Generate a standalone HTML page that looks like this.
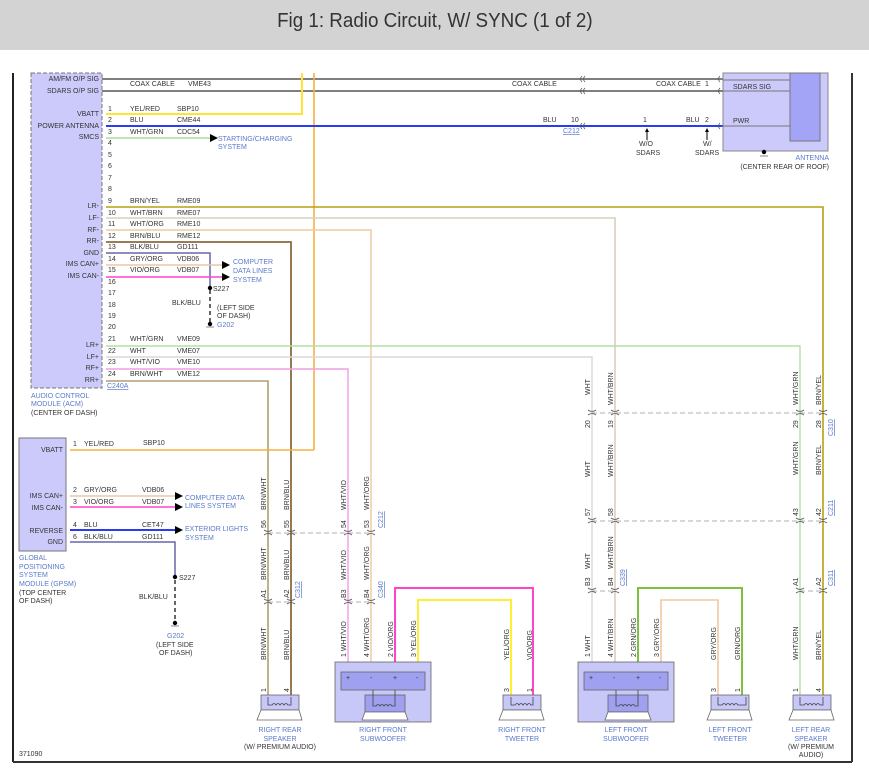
<!DOCTYPE html>
<html><head><meta charset="utf-8"><style>
html,body{margin:0;padding:0;background:#fff;width:869px;height:781px;overflow:hidden}
.hdr{position:absolute;left:0;top:0;width:869px;height:50px;background:#d3d3d3;text-align:center;font:20px "Liberation Sans",sans-serif;line-height:43px;color:#333}
.hdr span{display:inline-block;transform:scaleX(0.94)}
svg{position:absolute;left:0;top:0}
text{font-family:"Liberation Sans",sans-serif;font-size:7px;fill:#333}
.b{fill:#5a7acc}
.u{fill:#5a7acc;text-decoration:underline}
</style></head><body>
<div class="hdr"><span>Fig 1: Radio Circuit, W/ SYNC (1 of 2)</span></div>
<svg width="869" height="781" viewBox="0 0 869 781">
<line x1="13" y1="73" x2="13" y2="762" stroke="#222" stroke-width="2"/>
<line x1="852" y1="73" x2="852" y2="762" stroke="#333" stroke-width="2"/>
<line x1="13" y1="762" x2="852" y2="762" stroke="#333" stroke-width="2"/>

<rect x="31" y="73" width="71" height="315" fill="#cccafa" stroke="#777" stroke-dasharray="4,2"/>
<g text-anchor="end">
<text x="99" y="81">AM/FM O/P SIG</text><text x="99" y="93">SDARS O/P SIG</text>
<text x="99" y="116">VBATT</text><text x="99" y="128">POWER ANTENNA</text><text x="99" y="139">SMCS</text>
<text x="99" y="208">LR-</text><text x="99" y="220">LF-</text><text x="99" y="232">RF-</text><text x="99" y="243">RR-</text>
<text x="99" y="255">GND</text><text x="99" y="266">IMS CAN+</text><text x="99" y="278">IMS CAN-</text>
<text x="99" y="347">LR+</text><text x="99" y="359">LF+</text><text x="99" y="370">RF+</text><text x="99" y="382">RR+</text>
</g>
<g>
<text x="108" y="111">1</text><text x="108" y="122">2</text><text x="108" y="134">3</text><text x="108" y="145">4</text>
<text x="108" y="157">5</text><text x="108" y="168">6</text><text x="108" y="180">7</text><text x="108" y="191">8</text>
<text x="108" y="203">9</text><text x="108" y="215">10</text><text x="108" y="226">11</text><text x="108" y="238">12</text>
<text x="108" y="249">13</text><text x="108" y="261">14</text><text x="108" y="272">15</text><text x="108" y="284">16</text>
<text x="108" y="295">17</text><text x="108" y="307">18</text><text x="108" y="318">19</text><text x="108" y="329">20</text>
<text x="108" y="341">21</text><text x="108" y="353">22</text><text x="108" y="364">23</text><text x="108" y="376">24</text>
<text x="130" y="86">COAX CABLE</text><text x="188" y="86">VME43</text>
<text x="130" y="111">YEL/RED</text><text x="177" y="111">SBP10</text>
<text x="130" y="122">BLU</text><text x="177" y="122">CME44</text>
<text x="130" y="134">WHT/GRN</text><text x="177" y="134">CDC54</text>
<text x="130" y="203">BRN/YEL</text><text x="177" y="203">RME09</text>
<text x="130" y="215">WHT/BRN</text><text x="177" y="215">RME07</text>
<text x="130" y="226">WHT/ORG</text><text x="177" y="226">RME10</text>
<text x="130" y="238">BRN/BLU</text><text x="177" y="238">RME12</text>
<text x="130" y="249">BLK/BLU</text><text x="177" y="249">GD111</text>
<text x="130" y="261">GRY/ORG</text><text x="177" y="261">VDB06</text>
<text x="130" y="272">VIO/ORG</text><text x="177" y="272">VDB07</text>
<text x="130" y="341">WHT/GRN</text><text x="177" y="341">VME09</text>
<text x="130" y="353">WHT</text><text x="177" y="353">VME07</text>
<text x="130" y="364">WHT/VIO</text><text x="177" y="364">VME10</text>
<text x="130" y="376">BRN/WHT</text><text x="177" y="376">VME12</text>
<text x="172" y="305">BLK/BLU</text>
<text x="107" y="388" class="u">C240A</text>
<text x="31" y="398" class="b">AUDIO CONTROL</text>
<text x="31" y="406" class="b">MODULE (ACM)</text>
<text x="31" y="415">(CENTER OF DASH)</text>
<text x="218" y="141" class="b">STARTING/CHARGING</text><text x="218" y="149" class="b">SYSTEM</text>
<text x="233" y="264" class="b">COMPUTER</text><text x="233" y="273" class="b">DATA LINES</text><text x="233" y="282" class="b">SYSTEM</text>
<text x="213" y="291">S227</text>
<text x="217" y="310">(LEFT SIDE</text><text x="217" y="318">OF DASH)</text>
<text x="217" y="327" class="b">G202</text>
</g>

<line x1="102" y1="79" x2="723" y2="79" stroke="#333" stroke-width="1.3"/>
<line x1="102" y1="91" x2="723" y2="91" stroke="#333" stroke-width="1.3"/>
<text x="512" y="86">COAX CABLE</text><text x="656" y="86">COAX CABLE</text><text x="705" y="86">1</text>

<g fill="none">
<polyline points="106,114 302,114 302,73" stroke="#ffe433" stroke-width="2"/>
<line x1="314" y1="73" x2="314" y2="450" stroke="#f6b040" stroke-width="1.6"/>
<line x1="106" y1="126" x2="723" y2="126" stroke="#2a3cf0" stroke-width="2"/>
<line x1="106" y1="138" x2="210" y2="138" stroke="#a8e09a" stroke-width="1.5"/>
<polyline points="106,207 823,207 823,696" stroke="#b8a010" stroke-width="1.6"/>
<polyline points="106,218 615,218 615,696" stroke="#d8d0b8" stroke-width="1.6"/>
<polyline points="106,230 371,230 371,662" stroke="#f0c8a0" stroke-width="1.4"/>
<polyline points="106,242 291,242 291,696" stroke="#8a6a40" stroke-width="1.8"/>
<polyline points="106,253 210,253 210,288" stroke="#6666aa" stroke-width="1.5"/>
<line x1="210" y1="290" x2="210" y2="322" stroke="#333" stroke-width="1.5" stroke-dasharray="4,3"/>
<line x1="106" y1="265" x2="222" y2="265" stroke="#e8c8a8" stroke-width="1.5"/>
<line x1="106" y1="277" x2="222" y2="277" stroke="#ff44cc" stroke-width="1.5"/>
<polyline points="106,346 800,346 800,696" stroke="#b0e0a0" stroke-width="1.4"/>
<polyline points="106,357 592,357 592,662" stroke="#d8d8d8" stroke-width="1.4"/>
<polyline points="106,369 348,369 348,662" stroke="#f0a0e0" stroke-width="1.4"/>
<polyline points="106,381 268,381 268,696" stroke="#b0a070" stroke-width="1.6"/>
</g>
<polygon points="210,134 218,138 210,142" fill="#000"/>
<polygon points="222,261 230,265 222,269" fill="#000"/>
<polygon points="222,273 230,277 222,281" fill="#000"/>
<circle cx="210" cy="288" r="2.2" fill="#000"/>
<circle cx="210" cy="324" r="2.2" fill="#000"/>
<line x1="206" y1="327" x2="214" y2="327" stroke="#888"/>

<rect x="723" y="73" width="105" height="78" fill="#cccafa" stroke="#888"/>
<rect x="790" y="73" width="30" height="68" fill="#a4a4f6" stroke="#777"/>
<line x1="723" y1="91" x2="790" y2="91" stroke="#777"/>
<line x1="723" y1="126" x2="790" y2="126" stroke="#777"/>
<line x1="723" y1="80" x2="790" y2="80" stroke="#777"/>
<text x="733" y="89">SDARS SIG</text><text x="733" y="123">PWR</text>
<circle cx="764" cy="152" r="2.2" fill="#000"/><line x1="760" y1="156" x2="768" y2="156" stroke="#888"/>
<text x="829" y="160" class="b" text-anchor="end">ANTENNA</text>
<text x="829" y="169" text-anchor="end">(CENTER REAR OF ROOF)</text>
<text x="543" y="122">BLU</text><text x="571" y="122">10</text><text x="563" y="133" class="u">C212</text>
<text x="643" y="122">1</text><text x="686" y="122">BLU</text><text x="705" y="122">2</text>
<line x1="647" y1="131" x2="647" y2="140" stroke="#000"/><polygon points="645,132 647,128 649,132" fill="#000"/>
<line x1="707" y1="131" x2="707" y2="140" stroke="#000"/><polygon points="705,132 707,128 709,132" fill="#000"/>
<text x="639" y="146">W/O</text><text x="636" y="155">SDARS</text>
<text x="703" y="146">W/</text><text x="695" y="155">SDARS</text>
<g fill="none" stroke="#555" stroke-width="0.8">
<path d="M582,76 q-3,3 0,6 M585,76 q-3,3 0,6 M582,88 q-3,3 0,6 M585,88 q-3,3 0,6 M582,123 q-3,3 0,6 M585,123 q-3,3 0,6"/>
<path d="M720,76 q-3,3 0,6 M720,88 q-3,3 0,6 M720,123 q-3,3 0,6"/>
</g>

<rect x="19" y="438" width="47" height="113" fill="#cccafa" stroke="#777"/>
<g text-anchor="end"><text x="63" y="452">VBATT</text><text x="63" y="498">IMS CAN+</text><text x="63" y="510">IMS CAN-</text><text x="63" y="533">REVERSE</text><text x="63" y="544">GND</text></g>
<g fill="none">
<polyline points="70,450 314,450" stroke="#f6b040" stroke-width="1.6"/>
<line x1="70" y1="496" x2="175" y2="496" stroke="#e8c8a8" stroke-width="1.5"/>
<line x1="70" y1="507" x2="175" y2="507" stroke="#ff44cc" stroke-width="1.5"/>
<line x1="70" y1="530" x2="175" y2="530" stroke="#2a3cf0" stroke-width="2"/>
<polyline points="70,542 175,542 175,577" stroke="#6666aa" stroke-width="1.5"/>
<line x1="175" y1="580" x2="175" y2="622" stroke="#333" stroke-width="1.5" stroke-dasharray="4,3"/>
</g>
<polygon points="175,492 183,496 175,500" fill="#000"/><polygon points="175,503 183,507 175,511" fill="#000"/><polygon points="175,526 183,530 175,534" fill="#000"/>
<circle cx="175" cy="577" r="2.2" fill="#000"/><circle cx="175" cy="623" r="2.2" fill="#000"/><line x1="171" y1="626" x2="179" y2="626" stroke="#888"/>
<text x="73" y="446">1</text><text x="84" y="446">YEL/RED</text><text x="143" y="445">SBP10</text>
<text x="73" y="492">2</text><text x="84" y="492">GRY/ORG</text><text x="142" y="492">VDB06</text>
<text x="73" y="504">3</text><text x="84" y="504">VIO/ORG</text><text x="142" y="504">VDB07</text>
<text x="73" y="527">4</text><text x="84" y="527">BLU</text><text x="142" y="527">CET47</text>
<text x="73" y="539">6</text><text x="84" y="539">BLK/BLU</text><text x="142" y="539">GD111</text>
<text x="185" y="500" class="b">COMPUTER DATA</text><text x="185" y="508" class="b">LINES SYSTEM</text>
<text x="185" y="531" class="b">EXTERIOR LIGHTS</text><text x="185" y="540" class="b">SYSTEM</text>
<text x="179" y="580">S227</text><text x="139" y="599">BLK/BLU</text>
<text x="167" y="638" class="b">G202</text><text x="156" y="647">(LEFT SIDE</text><text x="159" y="655">OF DASH)</text>
<text x="19" y="560" class="b">GLOBAL</text><text x="19" y="569" class="b">POSITIONING</text><text x="19" y="577" class="b">SYSTEM</text><text x="19" y="586" class="b">MODULE (GPSM)</text>
<text x="19" y="595">(TOP CENTER</text><text x="19" y="603">OF DASH)</text>
<text x="19" y="756">371090</text>

<g stroke="#999" stroke-dasharray="5,3" stroke-width="0.8">
<line x1="592" y1="413" x2="823" y2="413"/>
<line x1="268" y1="533" x2="371" y2="533"/>
<line x1="592" y1="521" x2="823" y2="521"/>
<line x1="268" y1="602" x2="291" y2="602"/><line x1="348" y1="602" x2="371" y2="602"/>
<line x1="592" y1="591" x2="615" y2="591"/><line x1="800" y1="591" x2="823" y2="591"/>
</g>

<g fill="none">
<polyline points="395,662 395,588 533,588 533,696" stroke="#ff44cc" stroke-width="2"/>
<polyline points="418,662 418,600 511,600 511,696" stroke="#ffee33" stroke-width="2"/>
<polyline points="638,662 638,588 742,588 742,696" stroke="#80c040" stroke-width="2"/>
<polyline points="661,662 661,600 718,600 718,696" stroke="#f0c8a0" stroke-width="1.6"/>
</g>

<g>
<text transform="translate(266,510) rotate(-90)">BRN/WHT</text>
<text transform="translate(289,510) rotate(-90)">BRN/BLU</text>
<text transform="translate(266,528) rotate(-90)">56</text>
<text transform="translate(289,528) rotate(-90)">55</text>
<text transform="translate(346,510) rotate(-90)">WHT/VIO</text>
<text transform="translate(369,510) rotate(-90)">WHT/ORG</text>
<text transform="translate(346,528) rotate(-90)">54</text>
<text transform="translate(369,528) rotate(-90)">53</text>
<text transform="translate(383,528) rotate(-90)" class="u">C212</text>
<text transform="translate(266,580) rotate(-90)">BRN/WHT</text>
<text transform="translate(289,580) rotate(-90)">BRN/BLU</text>
<text transform="translate(266,598) rotate(-90)">A1</text>
<text transform="translate(289,598) rotate(-90)">A2</text>
<text transform="translate(300,598) rotate(-90)" class="u">C312</text>
<text transform="translate(346,580) rotate(-90)">WHT/VIO</text>
<text transform="translate(369,580) rotate(-90)">WHT/ORG</text>
<text transform="translate(346,598) rotate(-90)">B3</text>
<text transform="translate(369,598) rotate(-90)">B4</text>
<text transform="translate(383,598) rotate(-90)" class="u">C340</text>
<text transform="translate(266,660) rotate(-90)">BRN/WHT</text>
<text transform="translate(289,660) rotate(-90)">BRN/BLU</text>
<text transform="translate(266,692) rotate(-90)">1</text>
<text transform="translate(289,692) rotate(-90)">4</text>
<text transform="translate(346,657) rotate(-90)">1  WHT/VIO</text>
<text transform="translate(369,657) rotate(-90)">4  WHT/ORG</text>
<text transform="translate(393,657) rotate(-90)">2  VIO/ORG</text>
<text transform="translate(416,657) rotate(-90)">3  YEL/ORG</text>
<text transform="translate(509,660) rotate(-90)">YEL/ORG</text>
<text transform="translate(532,660) rotate(-90)">VIO/ORG</text>
<text transform="translate(509,692) rotate(-90)">3</text>
<text transform="translate(532,692) rotate(-90)">1</text>

<text transform="translate(590,395) rotate(-90)">WHT</text>
<text transform="translate(613,405) rotate(-90)">WHT/BRN</text>
<text transform="translate(590,428) rotate(-90)">20</text>
<text transform="translate(613,428) rotate(-90)">19</text>
<text transform="translate(590,477) rotate(-90)">WHT</text>
<text transform="translate(613,477) rotate(-90)">WHT/BRN</text>
<text transform="translate(590,516) rotate(-90)">57</text>
<text transform="translate(613,516) rotate(-90)">58</text>
<text transform="translate(590,569) rotate(-90)">WHT</text>
<text transform="translate(613,569) rotate(-90)">WHT/BRN</text>
<text transform="translate(590,586) rotate(-90)">B3</text>
<text transform="translate(613,586) rotate(-90)">B4</text>
<text transform="translate(625,586) rotate(-90)" class="u">C339</text>
<text transform="translate(590,657) rotate(-90)">1  WHT</text>
<text transform="translate(613,657) rotate(-90)">4  WHT/BRN</text>
<text transform="translate(636,657) rotate(-90)">2  GRN/ORG</text>
<text transform="translate(659,657) rotate(-90)">3  GRY/ORG</text>
<text transform="translate(716,660) rotate(-90)">GRY/ORG</text>
<text transform="translate(740,660) rotate(-90)">GRN/ORG</text>
<text transform="translate(716,692) rotate(-90)">3</text>
<text transform="translate(740,692) rotate(-90)">1</text>

<text transform="translate(798,405) rotate(-90)">WHT/GRN</text>
<text transform="translate(821,405) rotate(-90)">BRN/YEL</text>
<text transform="translate(798,428) rotate(-90)">29</text>
<text transform="translate(821,428) rotate(-90)">28</text>
<text transform="translate(833,436) rotate(-90)" class="u">C310</text>
<text transform="translate(798,475) rotate(-90)">WHT/GRN</text>
<text transform="translate(821,475) rotate(-90)">BRN/YEL</text>
<text transform="translate(798,516) rotate(-90)">43</text>
<text transform="translate(821,516) rotate(-90)">42</text>
<text transform="translate(833,516) rotate(-90)" class="u">C211</text>
<text transform="translate(798,586) rotate(-90)">A1</text>
<text transform="translate(821,586) rotate(-90)">A2</text>
<text transform="translate(833,586) rotate(-90)" class="u">C311</text>
<text transform="translate(798,660) rotate(-90)">WHT/GRN</text>
<text transform="translate(821,660) rotate(-90)">BRN/YEL</text>
<text transform="translate(798,692) rotate(-90)">1</text>
<text transform="translate(821,692) rotate(-90)">4</text>
</g>

<g fill="none" stroke="#555" stroke-width="0.8">
<path d="M264,530 q4,3 8,0 M264,535 q4,-3 8,0 M287,530 q4,3 8,0 M287,535 q4,-3 8,0 M344,530 q4,3 8,0 M344,535 q4,-3 8,0 M367,530 q4,3 8,0 M367,535 q4,-3 8,0"/>
<path d="M264,599 q4,3 8,0 M264,604 q4,-3 8,0 M287,599 q4,3 8,0 M287,604 q4,-3 8,0 M344,599 q4,3 8,0 M344,604 q4,-3 8,0 M367,599 q4,3 8,0 M367,604 q4,-3 8,0"/>
<path d="M588,410 q4,3 8,0 M588,415 q4,-3 8,0 M611,410 q4,3 8,0 M611,415 q4,-3 8,0 M796,410 q4,3 8,0 M796,415 q4,-3 8,0 M819,410 q4,3 8,0 M819,415 q4,-3 8,0"/>
<path d="M588,518 q4,3 8,0 M588,523 q4,-3 8,0 M611,518 q4,3 8,0 M611,523 q4,-3 8,0 M796,518 q4,3 8,0 M796,523 q4,-3 8,0 M819,518 q4,3 8,0 M819,523 q4,-3 8,0"/>
<path d="M588,588 q4,3 8,0 M588,593 q4,-3 8,0 M611,588 q4,3 8,0 M611,593 q4,-3 8,0 M796,588 q4,3 8,0 M796,593 q4,-3 8,0 M819,588 q4,3 8,0 M819,593 q4,-3 8,0"/>
</g>

<g stroke="#666" stroke-width="0.8">
<rect x="261" y="695" width="38" height="15" fill="#c8c8f8"/><polygon points="261,710 299,710 302,720 257,720" fill="#fff"/>
<rect x="503" y="695" width="38" height="15" fill="#c8c8f8"/><polygon points="503,710 541,710 544,720 499,720" fill="#fff"/>
<rect x="711" y="695" width="38" height="15" fill="#c8c8f8"/><polygon points="711,710 749,710 752,720 707,720" fill="#fff"/>
<rect x="793" y="695" width="38" height="15" fill="#c8c8f8"/><polygon points="793,710 831,710 834,720 789,720" fill="#fff"/>
<rect x="335" y="662" width="96" height="60" fill="#c8c8f8"/><rect x="341" y="672" width="84" height="18" fill="#a0a0f0"/>
<rect x="365" y="695" width="40" height="17" fill="#a0a0f0"/><polygon points="365,712 405,712 408,720 362,720" fill="#fff"/>
<rect x="578" y="662" width="96" height="60" fill="#c8c8f8"/><rect x="584" y="672" width="84" height="18" fill="#a0a0f0"/>
<rect x="608" y="695" width="40" height="17" fill="#a0a0f0"/><polygon points="608,712 648,712 651,720 605,720" fill="#fff"/>
</g>
<g fill="none" stroke="#444" stroke-width="0.8">
<path d="M268,697 v8 h4 q2,-3 4,0 q2,-3 4,0 q2,-3 4,0 q2,-3 4,0 h3 v-8"/>
<path d="M511,697 v8 h4 q2,-3 4,0 q2,-3 4,0 q2,-3 4,0 q2,-3 4,0 h2 v-8"/>
<path d="M718,697 v8 h4 q2,-3 4,0 q2,-3 4,0 q2,-3 4,0 q2,-3 4,0 h8 v-8"/>
<path d="M800,697 v8 h4 q2,-3 4,0 q2,-3 4,0 q2,-3 4,0 q2,-3 4,0 h3 v-8"/>
<path d="M373,690 v16 h3 q2,-3 4,0 q2,-3 4,0 q2,-3 4,0 q2,-3 4,0 h3 v-16"/>
<path d="M616,690 v16 h3 q2,-3 4,0 q2,-3 4,0 q2,-3 4,0 q2,-3 4,0 h3 v-16"/>
</g>
<g font-size="8"><text x="346" y="680">+</text><text x="370" y="680">-</text><text x="393" y="680">+</text><text x="416" y="680">-</text>
<text x="589" y="680">+</text><text x="613" y="680">-</text><text x="636" y="680">+</text><text x="659" y="680">-</text></g>

<g text-anchor="middle">
<text x="280" y="732" class="b">RIGHT REAR</text><text x="280" y="741" class="b">SPEAKER</text><text x="280" y="749">(W/ PREMIUM AUDIO)</text>
<text x="383" y="732" class="b">RIGHT FRONT</text><text x="383" y="741" class="b">SUBWOOFER</text>
<text x="522" y="732" class="b">RIGHT FRONT</text><text x="522" y="741" class="b">TWEETER</text>
<text x="626" y="732" class="b">LEFT FRONT</text><text x="626" y="741" class="b">SUBWOOFER</text>
<text x="730" y="732" class="b">LEFT FRONT</text><text x="730" y="741" class="b">TWEETER</text>
<text x="811" y="732" class="b">LEFT REAR</text><text x="811" y="741" class="b">SPEAKER</text><text x="811" y="749">(W/ PREMIUM</text><text x="811" y="757">AUDIO)</text>
</g>
</svg>
</body></html>
